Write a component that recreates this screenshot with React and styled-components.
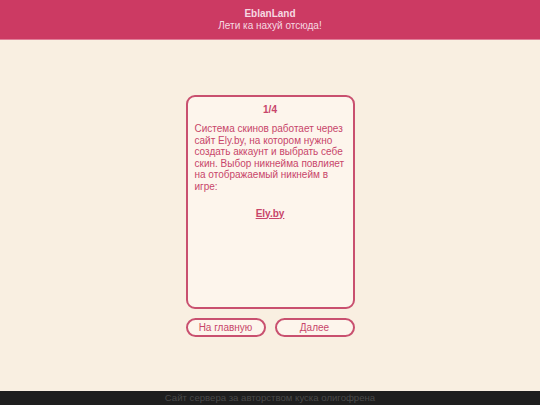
import React from "react";
import styled, { createGlobalStyle } from "styled-components";

const Global = createGlobalStyle`
  html, body { margin: 0; padding: 0; height: 100%; }
  body { background: #f9efe1; font-family: "Liberation Sans", Arial, sans-serif; }
  #root { height: 100%; }
`;

const Page = styled.div`
  display: flex;
  flex-direction: column;
  height: 405px;
`;

const Header = styled.header`
  background: #cc3a63;
  border-bottom: 1px solid #e07e98;
  height: 40px;
  box-sizing: border-box;
  display: flex;
  flex-direction: column;
  align-items: center;
  justify-content: center;
  color: #f6d9e2;
  font-size: 10px;
  line-height: 11.5px;
`;

const Title = styled.div`
  font-weight: bold;
`;

const Main = styled.main`
  flex: 1;
  display: flex;
  flex-direction: column;
  align-items: center;
  justify-content: center;
  gap: 9px;
`;

const Card = styled.section`
  width: 169px;
  height: 214px;
  box-sizing: border-box;
  border: 2px solid #c9506f;
  border-radius: 9px;
  background: #fdf5ec;
  padding: 7px;
  color: #c8456a;
  font-size: 10px;
  line-height: 11.5px;
  display: flex;
  flex-direction: column;
`;

const Step = styled.div`
  font-weight: bold;
  text-align: center;
  margin-bottom: 8px;
`;

const Text = styled.p`
  margin: 0;
`;

const LinkRow = styled.div`
  text-align: center;
  margin-top: 15.5px;
`;

const Link = styled.a`
  color: #c8456a;
  font-weight: bold;
  text-decoration: underline;
`;

const Buttons = styled.div`
  display: flex;
  gap: 9px;
  width: 169px;
`;

const Button = styled.button`
  flex: 1;
  height: 19px;
  box-sizing: border-box;
  border: 2px solid #c9506f;
  border-radius: 10px;
  background: #fdf5ec;
  color: #c8456a;
  font-family: "Liberation Sans", Arial, sans-serif;
  font-size: 10px;
  padding: 0;
`;

const Footer = styled.footer`
  background: #1e1e1e;
  color: #4a4a4a;
  height: 14px;
  font-size: 9.6px;
  line-height: 14px;
  text-align: center;
`;

export default function App() {
  return (
    <>
      <Global />
      <Page>
        <Header>
          <Title>EblanLand</Title>
          <div>Лети ка нахуй отсюда!</div>
        </Header>
        <Main>
          <Card>
            <Step>1/4</Step>
            <Text>
              Система скинов работает через сайт Ely.by, на котором нужно создать
              аккаунт и выбрать себе скин. Выбор никнейма повлияет на отображаемый
              никнейм в игре:
            </Text>
            <LinkRow>
              <Link href="#">Ely.by</Link>
            </LinkRow>
          </Card>
          <Buttons>
            <Button>На главную</Button>
            <Button>Далее</Button>
          </Buttons>
        </Main>
        <Footer>Сайт сервера за авторством куска олигофрена</Footer>
      </Page>
    </>
  );
}
